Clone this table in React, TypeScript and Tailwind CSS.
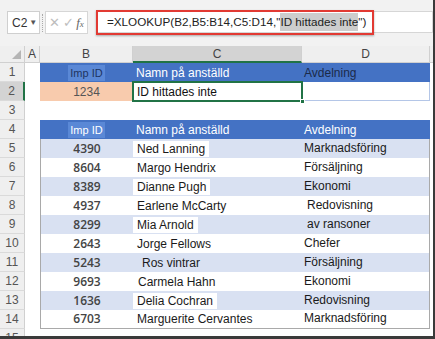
import React from "react";

type Row = {
  n: number;
  id: string;
  name: string;
  dept: string;
  namePad?: string;
  deptPad?: string;
  box?: string;
};

const rows: Row[] = [
  { n: 5, id: "4390", name: "Ned Lanning", dept: "Marknadsföring", box: "bg-white" },
  { n: 6, id: "8604", name: "Margo Hendrix", dept: "Försäljning" },
  { n: 7, id: "8389", name: "Dianne Pugh", dept: "Ekonomi", box: "bg-white" },
  { n: 8, id: "4937", name: "Earlene McCarty", dept: "Redovisning", deptPad: "pl-[5px]" },
  { n: 9, id: "8299", name: "Mia Arnold", dept: "av ransoner", deptPad: "pl-[5px]", box: "bg-white" },
  { n: 10, id: "2643", name: "Jorge Fellows", dept: "Chefer" },
  { n: 11, id: "5243", name: "Ros vintrar", dept: "Försäljning", namePad: "pl-[9px]" },
  { n: 12, id: "9693", name: "Carmela Hahn", dept: "Ekonomi", namePad: "pl-[5px]" },
  { n: 13, id: "1636", name: "Delia Cochran", dept: "Redovisning", box: "bg-white" },
  { n: 14, id: "6703", name: "Marguerite Cervantes", dept: "Marknadsföring" },
];

const RowNum = ({ n, active }: { n: number | string; active?: boolean }) => (
  <div
    className={
      "w-[25px] shrink-0 flex items-center justify-center border-b border-[#dadada] text-[12px] text-[#555] " +
      (active ? "bg-[#d3d3d3] border-r-2 border-r-[#217346]" : "bg-[#efefef] border-r border-r-[#d0d0d0]")
    }
  >
    {n}
  </div>
);

export default function App() {
  return (
    <div className="w-[435px] h-[339px] overflow-hidden bg-white border-r-2 border-b-[3px] border-[#3a3a3a] font-['Liberation_Sans',Arial,sans-serif]">
      {/* formula bar */}
      <div className="h-[46px] bg-[#f2f2f2] flex items-start pt-[11px] pl-[7px]">
        <div className="w-[33px] h-[23px] bg-white border border-[#cfcfcf] flex items-center pl-[4px] text-[12px] text-[#333]">
          C2<span className="text-[8px] ml-[2px] text-[#555]">▼</span>
        </div>
        <div className="w-[1px] h-[18px] mt-[3px] mx-[2px] border-l border-dotted border-[#aaa]" />
        <div className="w-[43px] h-[23px] bg-white border border-[#d6d6d6] flex items-center justify-around px-[2px] text-[#bdbdbd] text-[13px]">
          <span>✕</span>
          <span>✓</span>
          <span className="font-['Liberation_Serif',serif] italic text-[#666] text-[13px]">
            f<span className="text-[9px]">x</span>
          </span>
        </div>
        <div className="relative ml-[9px] flex-1 h-[22px] bg-white border border-[#d6d6d6] flex items-center pl-[9px] text-[11.7px] text-[#222] whitespace-nowrap">
          =XLOOKUP(B2,B5:B14,C5:D14,"
          <span className="bg-[#cdcdcd]">ID hittades inte</span>")
          <div className="absolute -left-[2px] -top-[2px] w-[278px] h-[25px] border-2 border-[#e23a33] shadow-[0_1px_2px_rgba(0,0,0,0.3)]" />
        </div>
      </div>

      {/* column headers */}
      <div className="flex h-[17px] text-[12px] text-[#444]">
        <div className="w-[25px] shrink-0 bg-[#efefef] border-r border-b border-[#d0d0d0] relative">
          <div className="absolute right-[3px] bottom-[3px] w-0 h-0 border-l-[9px] border-l-transparent border-b-[9px] border-b-[#b5b5b5]" />
        </div>
        <div className="w-[15px] shrink-0 bg-[#efefef] border-r border-b border-[#d0d0d0] flex items-center justify-center">A</div>
        <div className="w-[93px] shrink-0 bg-[#efefef] border-r border-b border-[#d0d0d0] flex items-center justify-center">B</div>
        <div className="w-[169px] shrink-0 bg-[#d3d3d3] border-r border-[#d0d0d0] border-b-2 border-b-[#217346] flex items-center justify-center">C</div>
        <div className="w-[128px] shrink-0 bg-[#efefef] border-r border-b border-[#d0d0d0] flex items-center justify-center">D</div>
        <div className="flex-1 bg-[#efefef] border-b border-[#d0d0d0]" />
      </div>

      {/* row 1 */}
      <div className="flex h-[19px] text-[12px]">
        <RowNum n={1} />
        <div className="w-[15px] shrink-0" />
        <div className="w-[93px] shrink-0 bg-[#4472c4] flex items-end justify-center pb-[1px]">
          <span className="bg-[#5a88d6] px-[2px] text-[11px] text-[#1e3461]">Imp ID</span>
        </div>
        <div className="w-[169px] shrink-0 bg-[#4472c4] flex items-center pl-[3px] text-white">Namn på anställd</div>
        <div className="w-[128px] shrink-0 bg-[#4472c4] flex items-center pl-[2px] text-[#1b2a4a]">Avdelning</div>
        <div className="flex-1" />
      </div>

      {/* row 2 */}
      <div className="flex h-[19px] text-[12px]">
        <RowNum n={2} active />
        <div className="w-[15px] shrink-0" />
        <div className="w-[93px] shrink-0 bg-[#f8cbad] flex items-center justify-center text-[#555]">1234</div>
        <div className="w-[169px] shrink-0 relative flex items-center pl-[4px] text-[#111]">
          ID hittades inte
          <div className="absolute -left-[1px] -top-[1px] -right-[1px] -bottom-[1px] border-2 border-[#217346]" />
          <div className="absolute -right-[3px] -bottom-[3px] w-[5px] h-[5px] bg-[#217346] border border-white" />
        </div>
        <div className="w-[128px] shrink-0 border-b border-r border-[#b4c6e7]" />
        <div className="flex-1" />
      </div>

      {/* row 3 */}
      <div className="flex h-[19px] text-[12px]">
        <RowNum n={3} />
        <div className="flex-1" />
      </div>

      {/* row 4 */}
      <div className="flex h-[19px] text-[12px] text-white">
        <RowNum n={4} />
        <div className="w-[15px] shrink-0" />
        <div className="w-[93px] shrink-0 bg-[#4472c4] flex items-end justify-center pb-[1px]">
          <span className="bg-[#5a88d6] px-[2px] text-[11px]">Imp ID</span>
        </div>
        <div className="w-[169px] shrink-0 bg-[#4472c4] flex items-center pl-[3px]">Namn på anställd</div>
        <div className="w-[128px] shrink-0 bg-[#4472c4] flex items-center pl-[2px]">Avdelning</div>
        <div className="flex-1" />
      </div>

      {rows.map((r, i) => {
        const band = r.n % 2 === 1 ? "bg-[#d9e1f2]" : "bg-white";
        const last = i === rows.length - 1;
        return (
          <div key={r.n} className="flex h-[19px] text-[12px]">
            <RowNum n={r.n} />
            <div className="w-[15px] shrink-0" />
            <div
              className={
                "w-[93px] shrink-0 flex items-center justify-center font-['Open_Sans',sans-serif] font-semibold text-[#444] border-l border-[#a9a9a9] " +
                band +
                (last ? " border-b" : "")
              }
            >
              {r.id}
            </div>
            <div className={"w-[169px] shrink-0 flex items-end pb-[1px] text-[#1a1a1a] " + band + (last ? " border-b border-[#a9a9a9]" : "")}>
              <span className={"pl-[4px] pr-[4px] h-[16px] leading-[16px] " + (r.box ?? "") + " " + (r.namePad ?? "")}>{r.name}</span>
            </div>
            <div
              className={
                "w-[128px] shrink-0 flex items-end pb-[1px] text-[#1a1a1a] border-r border-[#a9a9a9] " +
                band +
                (last ? " border-b" : "") +
                " " +
                (r.deptPad ?? "pl-[2px]")
              }
            >
              {r.dept}
            </div>
            <div className="flex-1" />
          </div>
        );
      })}

      {/* row 15 */}
      <div className="flex h-[19px] text-[12px]">
        <RowNum n={15} />
        <div className="flex-1" />
      </div>
    </div>
  );
}
